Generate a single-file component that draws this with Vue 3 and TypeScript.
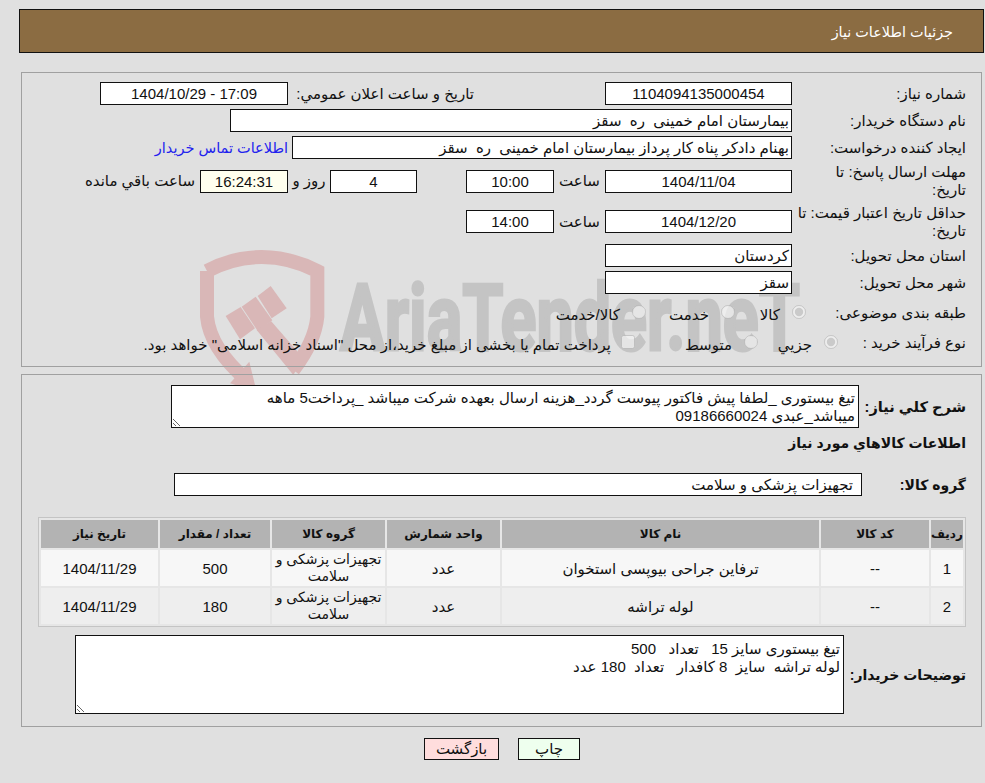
<script setup lang="ts">
interface Item {
  row: string
  code: string
  name: string
  unit: string
  group: string
  qty: string
  date: string
}

const items: Item[] = [
  { row: '1', code: '--', name: 'ترفاین جراحی بیوپسی استخوان', unit: 'عدد', group: 'تجهیزات پزشکی و سلامت', qty: '500', date: '1404/11/29' },
  { row: '2', code: '--', name: 'لوله تراشه', unit: 'عدد', group: 'تجهیزات پزشکی و سلامت', qty: '180', date: '1404/11/29' }
]

const buyer = 'بیمارستان امام خمینی  ره  سقز'
const creator = 'بهنام دادکر پناه کار پرداز بیمارستان امام خمینی  ره  سقز'
const description = 'تیغ بیستوری _لطفا پیش فاکتور پیوست گردد_هزینه ارسال بعهده شرکت میباشد _پرداخت5 ماهه\nمیباشد_عبدی 09186660024'
const notes = 'تیغ بیستوری سایز 15   تعداد   500\nلوله تراشه  سایز  8 کافدار   تعداد  180 عدد'
</script>

<template>
  <div class="page">
    <div class="watermark" aria-hidden="true">
      <svg class="shield" viewBox="0 0 450 450" width="150" height="150">
        <path class="band" d="M51 78 Q130 36 215 36 Q300 36 382 78 L382 215 Q375 290 310 375" />
        <path class="band" d="M51 78 L51 215 Q60 310 170 405" />
        <path class="fill" d="M120 415 L178 350 L200 440 Z" />
        <path class="fill" d="M107 213 L152 186 L195 250 L150 283 Z" />
        <path class="fill" d="M155 185 L197 155 L247 226 L203 258 Z" />
        <path class="fill" d="M203 153 L242 123 L290 190 L245 220 Z" />
        <path class="fill" d="M200 255 L243 228 L340 340 L310 390 Z" />
      </svg>
      <svg class="brand" viewBox="0 0 500 100" width="500" height="100">
        <text x="2" y="73" textLength="460" lengthAdjust="spacingAndGlyphs">AriaTender.neT</text>
      </svg>
    </div>

    <header class="title-bar">جزئیات اطلاعات نیاز</header>

    <section class="panel top-panel">
      <div class="row">
        <div class="label">شماره نیاز:</div>
        <div class="box w187">1104094135000454</div>
        <div class="label announce">تاریخ و ساعت اعلان عمومي:</div>
        <div class="box w188">17:09 - 1404/10/29</div>
      </div>
      <div class="row">
        <div class="label">نام دستگاه خریدار:</div>
        <div class="box start w562">{{ buyer }}</div>
      </div>
      <div class="row">
        <div class="label">ایجاد کننده درخواست:</div>
        <div class="box start w500">{{ creator }}</div>
        <a class="contact" href="#">اطلاعات تماس خریدار</a>
      </div>
      <div class="row deadline">
        <div class="label">مهلت ارسال پاسخ: تا<br />تاریخ:</div>
        <div class="box w187">1404/11/04</div>
        <div class="hour-label">ساعت</div>
        <div class="box w88">10:00</div>
        <div class="box w87 days">4</div>
        <div class="day-label">روز و</div>
        <div class="box w88 timer">16:24:31</div>
        <div class="remain">ساعت باقي مانده</div>
      </div>
      <div class="row validity">
        <div class="label">حداقل تاریخ اعتبار قیمت: تا<br />تاریخ:</div>
        <div class="box w187">1404/12/20</div>
        <div class="hour-label">ساعت</div>
        <div class="box w88">14:00</div>
      </div>
      <div class="row">
        <div class="label">استان محل تحویل:</div>
        <div class="box start w187">کردستان</div>
      </div>
      <div class="row">
        <div class="label">شهر محل تحویل:</div>
        <div class="box start w187">سقز</div>
      </div>
      <div class="row choice">
        <div class="label">طبقه بندی موضوعی:</div>
        <label class="opt opt-goods"><input type="radio" name="cat" checked disabled /><span>کالا</span></label>
        <label class="opt opt-service"><input type="radio" name="cat" disabled /><span>خدمت</span></label>
        <label class="opt opt-both"><input type="radio" name="cat" disabled /><span>کالا/خدمت</span></label>
      </div>
      <div class="row choice">
        <div class="label">نوع فرآیند خرید :</div>
        <label class="opt opt-small"><input type="radio" name="proc" checked disabled /><span>جزيي</span></label>
        <label class="opt opt-medium"><input type="radio" name="proc" disabled /><span>متوسط</span></label>
        <label class="opt opt-treasury"><input type="checkbox" disabled /><span>پرداخت تمام یا بخشی از مبلغ خرید،از محل "اسناد خزانه اسلامی" خواهد بود.</span></label>
      </div>
    </section>

    <section class="panel bottom-panel">
      <div class="desc-row">
        <div class="label strong desc-label">شرح کلي نیاز:</div>
        <textarea class="area desc" readonly :value="description"></textarea>
      </div>
      <h2 class="heading">اطلاعات کالاهاي مورد نیاز</h2>
      <div class="group-row">
        <div class="label strong w104">گروه کالا:</div>
        <div class="box start group">تجهیزات پزشکی و سلامت</div>
      </div>

      <table class="items">
        <colgroup>
          <col class="c-row" /><col class="c-code" /><col class="c-name" /><col class="c-unit" /><col class="c-group" /><col class="c-qty" /><col class="c-date" />
        </colgroup>
        <thead>
          <tr>
            <th>ردیف</th><th>کد کالا</th><th>نام کالا</th><th>واحد شمارش</th><th>گروه کالا</th><th>تعداد / مقدار</th><th>تاریخ نیاز</th>
          </tr>
        </thead>
        <tbody>
          <tr v-for="item in items" :key="item.row">
            <td>{{ item.row }}</td>
            <td>{{ item.code }}</td>
            <td>{{ item.name }}</td>
            <td>{{ item.unit }}</td>
            <td class="cell-group">{{ item.group }}</td>
            <td>{{ item.qty }}</td>
            <td>{{ item.date }}</td>
          </tr>
        </tbody>
      </table>

      <div class="notes-row">
        <div class="label strong w122">توضیحات خریدار:</div>
        <textarea class="area notes" readonly :value="notes"></textarea>
      </div>
    </section>

    <div class="actions">
      <button class="btn print" type="button">چاپ</button>
      <button class="btn back" type="button">بازگشت</button>
    </div>
  </div>
</template>

<style>
html,
body {
  margin: 0;
  background: #e0e0e0;
}
</style>

<style scoped>
.page {
  position: relative;
  width: 985px;
  height: 783px;
  box-sizing: border-box;
  padding-top: 9px;
  direction: rtl;
  background: #e0e0e0;
  color: #111;
  font: 15px/18px "Liberation Sans", "DejaVu Sans", sans-serif;
  white-space: pre-wrap;
  overflow: hidden;
}
.watermark {
  position: absolute;
  inset: 0;
  direction: ltr;
}
.shield {
  position: absolute;
  left: 190px;
  top: 245px;
}
.shield .band {
  fill: none;
  stroke: #d9b7b7;
  stroke-width: 42;
}
.shield .fill {
  fill: #d9b7b7;
}
.brand {
  position: absolute;
  left: 338px;
  top: 277px;
}
.brand text {
  font: 700 92px Roboto, sans-serif;
  fill: #c4c4c4;
  stroke: #c4c4c4;
  stroke-width: 3;
}
.title-bar,
.panel,
.actions {
  position: relative;
}
.title-bar {
  height: 44px;
  margin: 0 1px 0 19px;
  box-sizing: border-box;
  padding: 0 30px 0 0;
  border: 1px solid #111;
  background: #8b6c42;
  color: #fff;
  font-size: 14.4px;
  line-height: 44px;
}
.panel {
  margin: 0 3px 0 21px;
  padding-right: 15px;
  border: 1px solid #a0a0a0;
  box-sizing: border-box;
}
.top-panel {
  height: 295px;
  margin-top: 19px;
  padding-top: 9px;
}
.bottom-panel {
  height: 353px;
  margin-top: 7px;
  padding-top: 10px;
}
.row {
  display: flex;
  align-items: center;
  min-height: 23px;
  margin-bottom: 4px;
}
.deadline {
  height: 36px;
}
.validity {
  height: 37px;
}
.choice {
  height: 30px;
  margin-bottom: 0;
}
.label {
  flex: none;
  width: 174px;
  box-sizing: border-box;
  white-space: nowrap;
}
.announce {
  width: 186px;
  margin-right: 131px;
}
.box {
  flex: none;
  height: 23px;
  box-sizing: border-box;
  border: 1px solid #111;
  background: #fff;
  padding: 0 2px;
  line-height: 21px;
  text-align: center;
  overflow: hidden;
}
.start {
  text-align: right;
}
.w187 { width: 187px; }
.w188 { width: 188px; }
.w562 { width: 562px; }
.w500 { width: 500px; }
.w88 { width: 88px; }
.w87 { width: 87px; }
.w104 { width: 104px; }
.w122 { width: 122px; }
.contact {
  margin-right: 4px;
  color: #2222ee;
  font-size: 14.5px;
  text-decoration: none;
}
.hour-label {
  width: 51px;
  text-align: center;
}
.days {
  margin-right: 49px;
}
.day-label {
  width: 42px;
  text-align: center;
}
.timer {
  background: #ffffee;
}
.remain {
  margin-right: 5px;
}
.opt {
  display: flex;
  align-items: center;
  flex: none;
  white-space: nowrap;
}
.opt input {
  flex: none;
  margin: 0 0 3px;
  width: 14px;
  height: 14px;
}
.opt span {
  margin: 3px 12px 0 0;
}
.opt-goods { width: 71px; margin-right: -14px; }
.opt-service { width: 89px; }
.opt-small { width: 80px; margin-right: -46px; }
.opt-medium { width: 123px; }
.opt-treasury span { margin-right: 10px; }
.strong {
  font-weight: 700;
  font-size: 14px;
}
.desc-label {
  width: 107px;
  font-size: 14.6px;
}
.desc-row,
.group-row,
.notes-row {
  display: flex;
  align-items: center;
}
.area {
  display: block;
  flex: none;
  box-sizing: border-box;
  margin: 0;
  border: 1px solid #111;
  border-radius: 0;
  outline: none;
  background: #fff;
  color: #111;
  padding: 3px 3px 2px;
  font: inherit;
  line-height: 18px;
  resize: both;
  overflow: hidden;
}
.desc {
  width: 688px;
  height: 43px;
}
.heading {
  margin: 6px 0 0;
  height: 24px;
  font-size: 14px;
  font-weight: 700;
  line-height: 18px;
}
.group-row {
  margin-top: 15px;
}
.group {
  width: 688px;
  padding: 0 8px;
}
.items {
  margin-top: 21px;
  width: 928px;
  table-layout: fixed;
  border-collapse: separate;
  border-spacing: 2px;
  border: 1px solid #c4c4c4;
  background: #e6e6e6;
  text-align: center;
}
.c-row { width: 32px; }
.c-code { width: 108px; }
.c-name { width: 317px; }
.c-unit { width: 113px; }
.c-group { width: 113px; }
.c-qty { width: 110px; }
.c-date { width: 117px; }
.items th {
  height: 28px;
  padding: 0;
  background: #b3b3b3;
  font-size: 12px;
  font-weight: 700;
}
.items td {
  height: 36px;
  padding: 0 2px;
  background: #f7f7f7;
  line-height: 17px;
}
.items td.cell-group {
  padding: 0;
  font-size: 14px;
}
.items tr:nth-child(2) td {
  background: #eeeeee;
}
.notes-row {
  margin-top: 8px;
}
.notes {
  width: 769px;
  height: 79px;
  padding-top: 4px;
}
.actions {
  display: flex;
  justify-content: center;
  gap: 19px;
  padding-left: 19px;
  margin-top: 11px;
}
.btn {
  height: 22px;
  box-sizing: border-box;
  padding: 0;
  border: 1px solid #111;
  color: #111;
  font: 15px/20px "Liberation Sans", "DejaVu Sans", sans-serif;
}
.print {
  width: 62px;
  background: #eeffee;
}
.back {
  width: 75px;
  background: #ffdddd;
}
</style>
